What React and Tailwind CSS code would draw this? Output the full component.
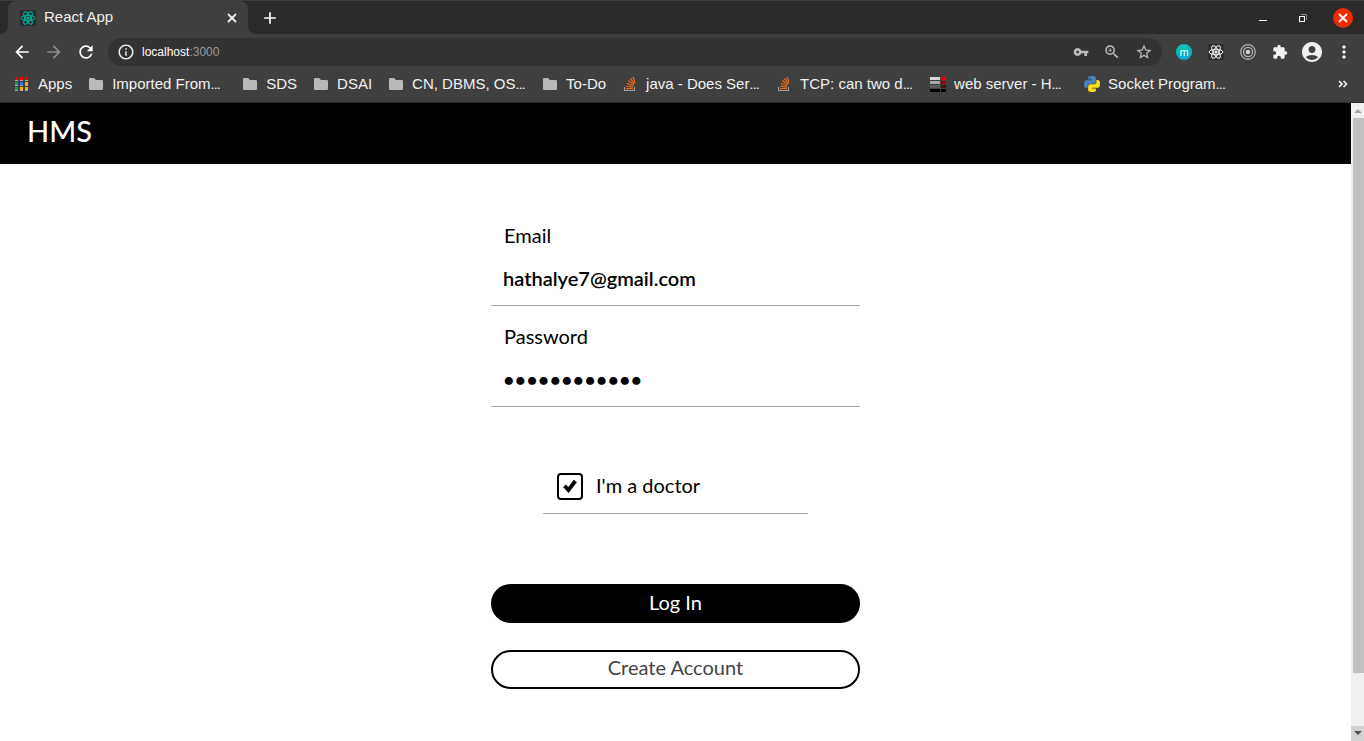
import { useState } from "react";
import {
  MdAccountCircle,
  MdAdd,
  MdArrowBack,
  MdArrowForward,
  MdExtension,
  MdInfoOutline,
  MdMoreVert,
  MdRefresh,
  MdStarBorder,
  MdVpnKey,
  MdZoomIn,
} from "react-icons/md";

function ReactLogo({ className, background, color }) {
  return (
    <svg viewBox="0 0 16 16" className={className} aria-hidden="true">
      <rect width="16" height="16" fill={background} />
      <g fill="none" stroke={color} strokeWidth="1">
        <ellipse cx="8" cy="8" rx="6.9" ry="2.7" />
        <ellipse cx="8" cy="8" rx="6.9" ry="2.7" transform="rotate(60 8 8)" />
        <ellipse cx="8" cy="8" rx="6.9" ry="2.7" transform="rotate(120 8 8)" />
      </g>
      <circle cx="8" cy="8" r="1.5" fill={color} />
    </svg>
  );
}

function CrossIcon() {
  return (
    <svg viewBox="0 0 16 16" className="size-4" fill="none" aria-hidden="true">
      <path d="M4 4l8 8M12 4l-8 8" stroke="currentColor" strokeWidth="1.8" />
    </svg>
  );
}

function AppsIcon() {
  const cells = [
    ["#f00000", "#f00000", "#f00000"],
    ["#0fa25a", "#2f6fee", "#fba90b"],
    ["#0fa25a", "#fbb40b", "#fba90b"],
  ];
  return (
    <svg viewBox="0 0 16 16" className="size-4 shrink-0" aria-hidden="true">
      {cells.map((row, r) =>
        row.map((fill, c) => (
          <g key={`${r}-${c}`}>
            <rect x={1 + c * 5} y={1 + r * 5} width="3" height="3" fill={fill} />
            <rect x={1 + c * 5} y={4 + r * 5} width="3" height="1" fill="#a9a9a9" />
          </g>
        ))
      )}
    </svg>
  );
}

function FolderIcon() {
  return (
    <svg viewBox="0 0 16 16" className="size-4 shrink-0" aria-hidden="true">
      <path
        d="M2.2 2H6l2 2h5.8A1.2 1.2 0 0 1 15 5.2v7.6A1.2 1.2 0 0 1 13.800 14H2.200A1.200 1.200 0 0 1 1 12.800V3.200A1.200 1.200 0 0 1 2.200 2z"
        fill="#b9b9b9"
      />
    </svg>
  );
}

function StackOverflowIcon() {
  return (
    <svg viewBox="0 0 16 16" className="size-4 shrink-0" fill="none" aria-hidden="true">
      <path d="M2.500 11v3.500h10V11" stroke="#9aa0a6" strokeWidth="1.100" />
      <g stroke="#f06a1a" strokeWidth="1.200">
        <path d="M4 12.500h7" />
        <path d="M4.200 10l6.900 1.100" />
        <path d="M4.900 7.300l6.500 2.500" />
        <path d="M6.300 4.600l5.600 4" />
        <path d="M8.300 2.400l4.200 5.200" />
        <path d="M11 1l2 5.600" />
      </g>
    </svg>
  );
}

function ServerIcon() {
  return (
    <svg viewBox="0 0 16 16" className="size-4 shrink-0" aria-hidden="true">
      <rect y="1" width="10" height="3" fill="#d6d6d6" />
      <rect y="5" width="10" height="3" fill="#a9a9a9" />
      <rect y="9" width="10" height="3" fill="#5c5c5c" />
      <rect y="13" width="10" height="3" fill="#000000" />
      <rect x="11" y="1" width="5" height="3" fill="#f40000" />
      <rect x="11" y="5" width="5" height="3" fill="#a90010" />
      <rect x="11" y="9" width="5" height="3" fill="#3b1418" />
      <rect x="11" y="13" width="5" height="3" fill="#000000" />
    </svg>
  );
}

function PythonIcon() {
  return (
    <svg viewBox="0 0 24 24" className="size-4 shrink-0" aria-hidden="true">
      <path
        fill="#4784bd"
        d="M14.25.18l.9.2.73.26.59.3.45.32.34.34.25.34.16.33.1.3.04.26.02.2-.01.13V8.500l-.05.63-.13.55-.21.46-.26.38-.3.31-.33.25-.35.19-.35.14-.33.1-.3.07-.26.04-.21.02H8.770l-.69.05-.59.14-.5.22-.41.27-.33.32-.27.35-.2.36-.15.37-.1.35-.07.32-.04.27-.02.21v3.060H3.170l-.21-.03-.28-.07-.32-.12-.35-.18-.36-.26-.36-.36-.35-.46-.32-.59-.28-.73-.21-.88-.14-1.050-.05-1.230.06-1.220.16-1.040.24-.87.32-.71.36-.57.4-.44.42-.33.42-.24.4-.16.36-.1.32-.05.24-.01h.16l.06.01h8.160v-.83H6.180l-.01-2.750-.02-.37.05-.34.11-.31.17-.28.25-.26.31-.23.38-.2.44-.18.51-.15.58-.12.64-.1.71-.06.77-.04.84-.02 1.270.05zm-6.300 1.980l-.23.33-.08.41.08.41.23.34.33.22.41.09.41-.09.33-.22.23-.34.08-.41-.08-.41-.23-.33-.33-.22-.41-.09-.41.09z"
      />
      <path
        fill="#fddc18"
        d="M21.040 6.110l.28.06.32.12.35.18.36.27.36.35.35.47.32.59.28.73.21.88.14 1.040.05 1.230-.06 1.230-.16 1.040-.24.86-.32.71-.36.57-.4.45-.42.33-.42.24-.4.16-.36.09-.32.05-.24.02-.16-.01h-8.220v.82h5.840l.01 2.760.02.36-.05.34-.11.31-.17.29-.25.25-.31.24-.38.2-.44.17-.51.15-.58.13-.64.09-.71.07-.77.04-.84.01-1.270-.04-1.070-.14-.9-.2-.73-.25-.59-.3-.45-.33-.34-.34-.25-.34-.16-.33-.1-.3-.04-.25-.02-.2.01-.13v-5.340l.05-.64.13-.54.21-.46.26-.38.3-.32.33-.24.35-.2.35-.14.33-.1.3-.06.26-.04.21-.02.13-.01h5.840l.69-.05.59-.14.5-.21.41-.28.33-.32.27-.35.2-.36.15-.36.1-.35.07-.32.04-.28.02-.21V6.070h2.090z"
      />
    </svg>
  );
}

const bookmarks = [
  { icon: AppsIcon, label: "Apps" },
  { icon: FolderIcon, label: "Imported From", clipped: true },
  { icon: FolderIcon, label: "SDS" },
  { icon: FolderIcon, label: "DSAI" },
  { icon: FolderIcon, label: "CN, DBMS, OS", clipped: true },
  { icon: FolderIcon, label: "To-Do" },
  { icon: StackOverflowIcon, label: "java - Does Ser", clipped: true },
  { icon: StackOverflowIcon, label: "TCP: can two d", clipped: true },
  { icon: ServerIcon, label: "web server - H", clipped: true },
  { icon: PythonIcon, label: "Socket Program", clipped: true },
];

function TabStrip() {
  return (
    <div className="flex h-[34px] items-end border-t border-[#3c3c3c] bg-[#2b2b2b]">
      <svg viewBox="0 0 8 8" className="size-2 shrink-0" aria-hidden="true">
        <path d="M8 0v8H0a8 8 0 0 0 8-8z" fill="#3f3f3f" />
      </svg>
      <div className="flex h-[33px] w-60 items-center rounded-t-lg bg-[#3f3f3f] pr-2 pl-3">
        <ReactLogo className="size-4" background="#282c34" color="#00b894" />
        <span className="flex-1 pl-2 text-[15px]">React App</span>
        <button type="button" aria-label="Close tab">
          <CrossIcon />
        </button>
      </div>
      <svg viewBox="0 0 8 8" className="size-2 shrink-0" aria-hidden="true">
        <path d="M0 0v8h8a8 8 0 0 1-8-8z" fill="#3f3f3f" />
      </svg>
      <button type="button" aria-label="New tab" className="flex h-[33px] w-7 items-center justify-center">
        <MdAdd className="size-5 text-white" />
      </button>
      <div className="ml-auto flex h-[33px] items-center gap-5 pr-[11px]">
        <button type="button" aria-label="Minimize" className="flex size-5 items-center justify-center">
          <svg viewBox="0 0 20 20" className="size-5" aria-hidden="true">
            <path d="M6 12.500h8" stroke="#fff" />
          </svg>
        </button>
        <button type="button" aria-label="Restore" className="flex size-5 items-center justify-center">
          <svg viewBox="0 0 20 20" className="size-5" fill="none" aria-hidden="true">
            <path d="M8 6.500h5.500V12" stroke="#8a8a8a" />
            <rect x="6.500" y="8.500" width="5" height="5" stroke="#fff" />
          </svg>
        </button>
        <button
          type="button"
          aria-label="Close window"
          className="flex size-5 items-center justify-center rounded-full bg-[#ee2a00] text-white"
        >
          <CrossIcon />
        </button>
      </div>
    </div>
  );
}

function Toolbar() {
  return (
    <div className="flex h-9 items-center">
      <div className="flex w-[108px] items-center gap-3 pl-3">
        <button type="button" aria-label="Back">
          <MdArrowBack className="size-5 text-white" />
        </button>
        <button type="button" aria-label="Forward">
          <MdArrowForward className="size-5 text-[#8c8c8c]" />
        </button>
        <button type="button" aria-label="Reload">
          <MdRefresh className="size-5 text-white" />
        </button>
      </div>
      <div className="flex h-7 flex-1 items-center rounded-full bg-[#333333] px-[9px]">
        <MdInfoOutline className="size-[18px] shrink-0 text-[#eeeeee]" />
        <a href="http://localhost:3000" className="flex-1 pl-[7px] text-[12px] text-white">
          localhost<span className="text-[#9a9a9a]">:3000</span>
        </a>
        <div className="flex items-center gap-3.5 text-[#bdbdbd]">
          <button type="button" aria-label="Saved passwords">
            <MdVpnKey className="size-4" />
          </button>
          <button type="button" aria-label="Zoom">
            <MdZoomIn className="size-[18px]" />
          </button>
          <button type="button" aria-label="Bookmark this page">
            <MdStarBorder className="size-[18px]" />
          </button>
        </div>
      </div>
      <div className="flex items-center gap-4 pr-3 pl-3.5 text-[#f1f1f1]">
        <button
          type="button"
          aria-label="Extension m"
          className="flex size-4 items-center justify-center rounded-full bg-linear-to-b from-[#00c8a8] to-[#00a8d0] text-[11px] leading-4 text-white"
        >
          m
        </button>
        <button type="button" aria-label="React Developer Tools">
          <ReactLogo className="size-4" background="#2f2f2f" color="#f1f1f1" />
        </button>
        <button type="button" aria-label="Recorder">
          <svg viewBox="0 0 16 16" className="size-4" fill="none" stroke="#b5b5b5" aria-hidden="true">
            <circle cx="8" cy="8" r="7.300" strokeWidth="1.200" />
            <circle cx="8" cy="8" r="4.600" strokeWidth="1.200" />
            <circle cx="8" cy="8" r="2.300" fill="#d0d0d0" stroke="none" />
          </svg>
        </button>
        <button type="button" aria-label="Extensions">
          <MdExtension className="size-4" />
        </button>
        <button type="button" aria-label="Profile" className="-mx-1">
          <MdAccountCircle className="size-6" />
        </button>
        <button type="button" aria-label="Browser menu" className="-mx-0.5">
          <MdMoreVert className="size-5" />
        </button>
      </div>
    </div>
  );
}

function BookmarksBar() {
  return (
    <nav className="flex h-8 items-center gap-4 px-3.5 pb-1 text-[15px] leading-7 whitespace-nowrap">
      {bookmarks.map(({ icon: Icon, label, clipped }) => (
        <a key={label} href="#" className="flex items-center gap-2">
          <Icon />
          <span className={clipped ? "w-[114px]" : ""}>
            {label}
            {clipped && <span className="font-['Roboto',sans-serif]">…</span>}
          </span>
        </a>
      ))}
      <button type="button" aria-label="More bookmarks" className="ml-auto">
        <svg viewBox="0 0 14 14" className="size-3.5" fill="none" aria-hidden="true">
          <path d="M3 4l3 3-3 3M7.500 4l3 3-3 3" stroke="#f1f1f1" strokeWidth="1.700" />
        </svg>
      </button>
    </nav>
  );
}

function Field({ id, label, ...input }) {
  return (
    <div className="flex flex-col border-b border-[#a6a6a6] px-3">
      <label htmlFor={id} className="px-px text-[20px] leading-6">
        {label}
      </label>
      <input
        id={id}
        className="mt-3 h-[46px] w-full bg-transparent pb-2 text-[20px] font-semibold outline-none"
        {...input}
      />
    </div>
  );
}

function LoginForm() {
  const [email, setEmail] = useState("hathalye7@gmail.com");
  const [password, setPassword] = useState("doctordoctor");
  const [doctor, setDoctor] = useState(true);
  return (
    <form
      className="mx-auto flex w-[369px] max-w-full flex-col pt-[59px] pb-[52px] text-[20px] leading-6"
      onSubmit={(e) => e.preventDefault()}
    >
      <div className="flex flex-col gap-[18px]">
        <Field id="email" label="Email" type="email" value={email} onChange={(e) => setEmail(e.target.value)} />
        <Field
          id="password"
          label="Password"
          type="password"
          value={password}
          onChange={(e) => setPassword(e.target.value)}
        />
      </div>
      <div className="mx-[52px] mt-[66px] flex items-center border-b border-[#a6a6a6] px-3.5 pb-[13px]">
        <span className="relative flex">
          <input
            id="doctor"
            type="checkbox"
            checked={doctor}
            onChange={(e) => setDoctor(e.target.checked)}
            className="peer h-[27px] w-[26px] appearance-none rounded border-2 border-black"
          />
          <svg
            viewBox="0 0 26 27"
            className="pointer-events-none absolute inset-0 hidden h-[27px] w-[26px] peer-checked:block"
            fill="none"
            aria-hidden="true"
          >
            <path d="M7.500 12.800l3.900 4.200 7-9" stroke="#000" strokeWidth="3.800" />
          </svg>
        </span>
        <label htmlFor="doctor" className="pb-[3px] pl-[13px]">
          I'm a doctor
        </label>
      </div>
      <button type="submit" className="mt-[70px] h-[39px] rounded-full bg-black pb-1 text-white">
        Log In
      </button>
      <button
        type="button"
        className="mt-[27px] h-[39px] rounded-full border-2 border-black pb-1.5 text-[#444444]"
      >
        Create Account
      </button>
    </form>
  );
}

function Scrollbar() {
  return (
    <div className="flex w-[13px] shrink-0 flex-col bg-[#f0f0f0]" aria-hidden="true">
      <svg viewBox="0 0 13 15" className="h-[15px] w-[13px]">
        <path d="M3 10l4-4 4 4z" fill="#a3a3a3" />
      </svg>
      <div className="ml-0.5 min-h-0 grow-[555] basis-0 bg-[#c1c1c1]" />
      <div className="min-h-0 grow-[53] basis-0" />
      <svg viewBox="0 0 13 15" className="h-[15px] w-[13px] bg-[#d2d2d2]">
        <path d="M3 5h8l-4 4z" fill="#505050" />
      </svg>
    </div>
  );
}

export default function App() {
  return (
    <div className="flex min-h-screen flex-col bg-white">
      <header className="border-b border-[#282828] bg-[#3f3f3f] font-['Liberation_Sans',Arial,sans-serif] text-[#f1f1f1]">
        <TabStrip />
        <Toolbar />
        <BookmarksBar />
      </header>
      <div className="flex flex-1">
        <main className="min-w-0 flex-1 font-['Lato',sans-serif] text-black">
          <div className="flex h-[61px] items-center bg-black px-[27px] pb-1.5">
            <h1 className="text-[29px] leading-9 font-medium text-white">HMS</h1>
          </div>
          <LoginForm />
        </main>
        <Scrollbar />
      </div>
    </div>
  );
}
